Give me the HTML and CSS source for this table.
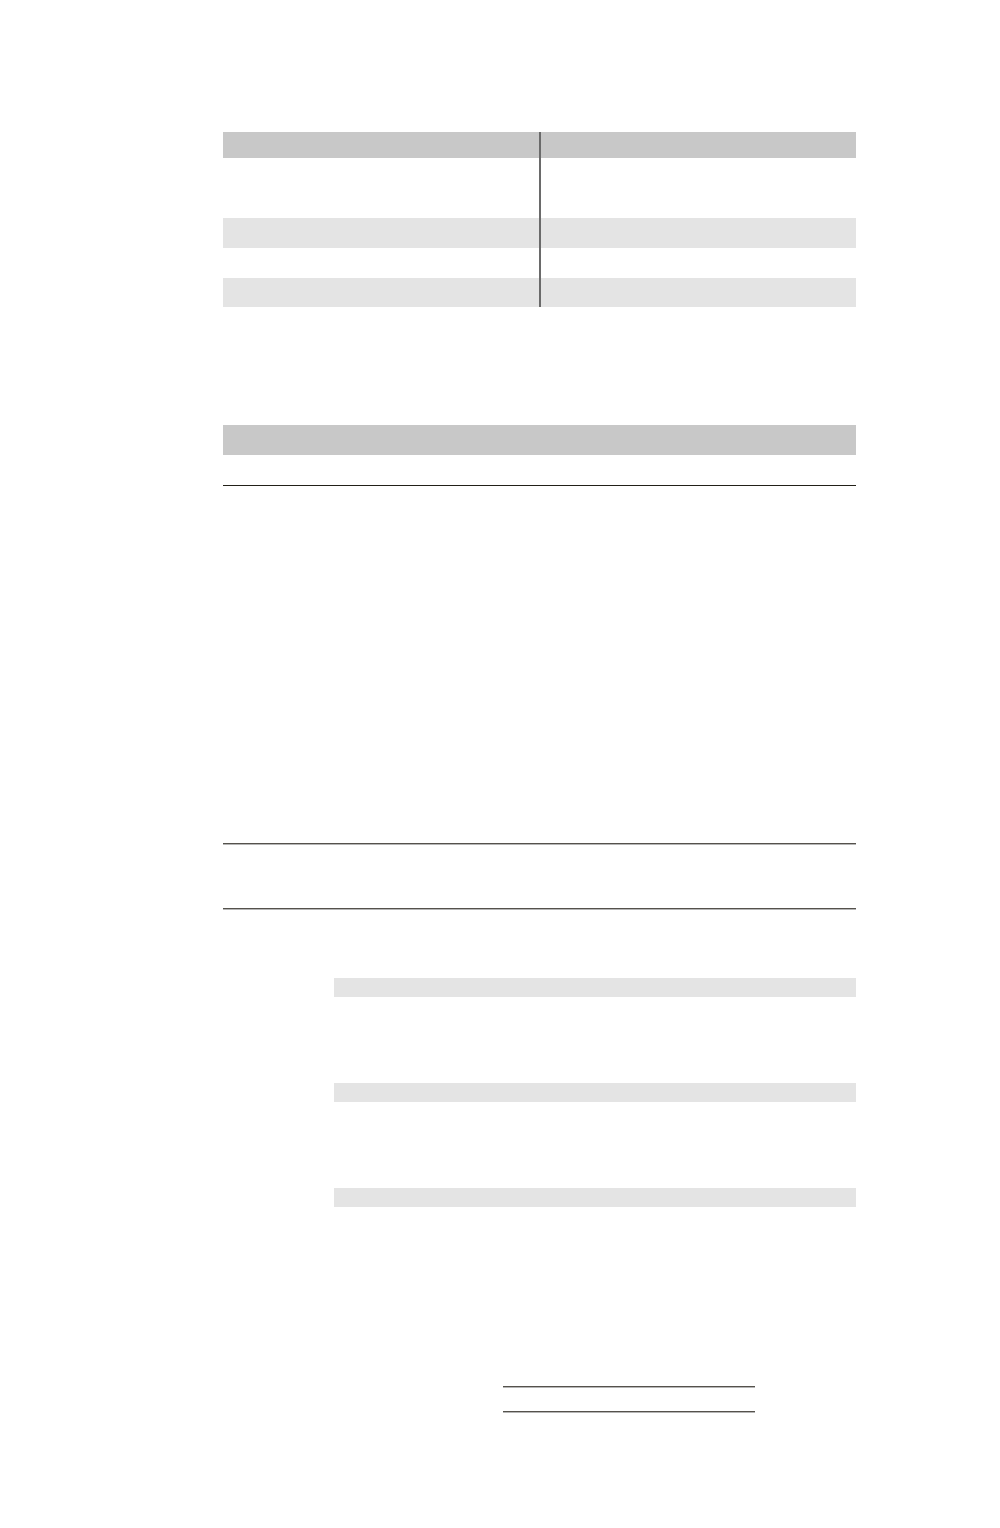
FILE: index.html
```html
<!DOCTYPE html>
<html>
<head>
<meta charset="utf-8">
<link rel="stylesheet" href="styles.css">
</head>
<body>
<main class="page">
  <section class="grid-table">
    <div class="cell head"></div><div class="cell head split"></div>
    <div class="cell tall"></div><div class="cell tall split"></div>
    <div class="cell alt"></div><div class="cell alt split"></div>
    <div class="cell"></div><div class="cell split"></div>
    <div class="cell alt last"></div><div class="cell alt split last"></div>
  </section>

  <section class="table-two">
    <div class="t2-head"></div>
    <div class="t2-row"></div>
  </section>

  <section class="ruled">
    <div class="rule"></div>
    <div class="ruled-body"></div>
    <div class="rule"></div>
  </section>

  <section class="bars">
    <div class="bar"></div>
    <div class="bar"></div>
    <div class="bar"></div>
  </section>

  <section class="sign">
    <div class="sign-line"></div>
    <div class="sign-line"></div>
  </section>
</main>
</body>
</html>
```

FILE: styles.css
```css
html, body {
  margin: 0;
  padding: 0;
  background: #ffffff;
  font-family: "Liberation Sans", Arial, sans-serif;
}

.page {
  width: 633px;
  margin-left: 223px;
  padding-top: 132px;
  display: flex;
  flex-direction: column;
}

.grid-table {
  display: grid;
  grid-template-columns: 317px 316px;
  grid-template-rows: 26px 60px 30px 30px 29px;
}

.cell {
  background: #ffffff;
}

.cell.head {
  background: #c8c8c8;
}

.cell.alt {
  background: #e4e4e4;
}

.cell.split {
  border-left: 2px solid #6a6a6a;
  margin-left: -1px;
}

.table-two {
  margin-top: 118px;
  display: flex;
  flex-direction: column;
}

.t2-head {
  height: 30px;
  background: #c8c8c8;
}

.t2-row {
  height: 30px;
  border-bottom: 1px solid #222018;
}

.ruled {
  margin-top: 357px;
  display: flex;
  flex-direction: column;
}

.rule {
  height: 1px;
  background: #55524c;
  border-bottom: 1px solid #b5b5b5;
}

.ruled-body {
  height: 63px;
}

.bars {
  margin-top: 68px;
  margin-left: 111px;
  display: flex;
  flex-direction: column;
  gap: 86px;
}

.bar {
  height: 19px;
  background: #e4e4e4;
}

.sign {
  margin-top: 179px;
  margin-left: 280px;
  width: 252px;
  display: flex;
  flex-direction: column;
  gap: 23px;
}

.sign-line {
  height: 1px;
  background: #55524c;
  border-bottom: 1px solid #b5b5b5;
}
```
